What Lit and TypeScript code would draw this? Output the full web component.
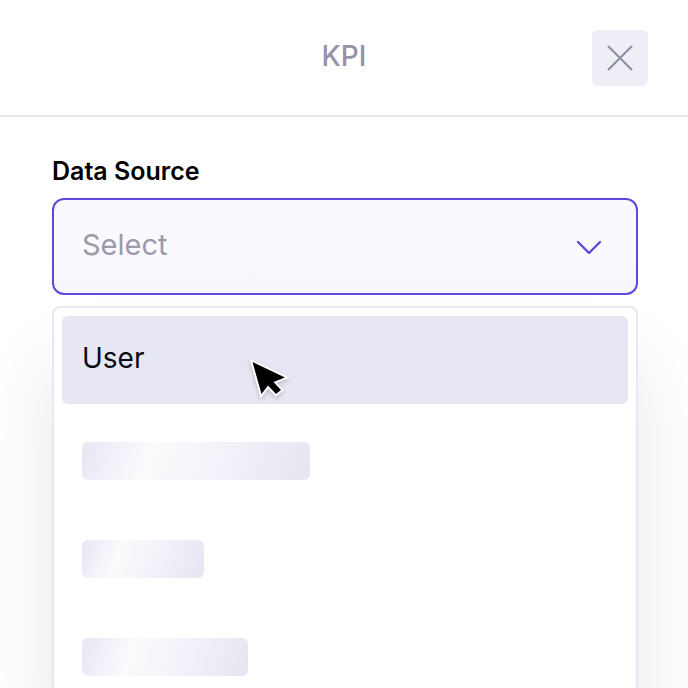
import { LitElement, html, css, svg } from "lit";
import { customElement, state } from "lit/decorators.js";
import { styleMap } from "lit/directives/style-map.js";

const closeIcon = svg`<path d="M2 2 L26 26 M26 2 L2 26" fill="none" stroke="#8f8fa3" stroke-width="2.2" />`;
const chevronIcon = svg`<path d="M2 3 L13 14 L24 3" fill="none" stroke="#5b4bdb" stroke-width="2.4" stroke-linecap="round" stroke-linejoin="round" />`;

@customElement("app-root")
export class AppRoot extends LitElement {
  static styles = css`
    :host {
      display: flex;
      flex-direction: column;
      height: 100vh;
      overflow: hidden;
      background: #fff;
      color: #0b0b12;
      font-family: Inter, "Liberation Sans", sans-serif;
    }
    * {
      box-sizing: border-box;
    }
    header {
      display: grid;
      grid-template-columns: 56px 1fr 56px;
      align-items: center;
      padding: 30px 40px 29px;
      border-bottom: 2px solid #e6e6ee;
    }
    h1 {
      grid-column: 2;
      margin: 0;
      padding-bottom: 4px;
      text-align: center;
      font-size: 28px;
      line-height: 32px;
      font-weight: 500;
      color: #9594a6;
    }
    .close {
      display: grid;
      place-items: center;
      width: 56px;
      height: 56px;
      padding: 0;
      border: 0;
      border-radius: 6px;
      background: #eeeff6;
    }
    main {
      flex: 1;
      display: flex;
      flex-direction: column;
      padding: 38px 50px 0 52px;
      min-height: 0;
    }
    label {
      font-size: 25px;
      line-height: 32px;
      font-weight: 600;
      color: #000;
      margin-bottom: 11px;
    }
    .field {
      display: grid;
      align-items: center;
      margin-bottom: 11px;
    }
    .field > * {
      grid-area: 1 / 1;
    }
    select {
      appearance: none;
      width: 100%;
      height: 97px;
      margin: 0;
      padding: 0 80px 4px 28px;
      border: 2px solid #5b4bdb;
      border-radius: 12px;
      outline: none;
      background: linear-gradient(#faf9ff 60%, #f7f6fd);
      font: 400 29px/32px Inter, "Liberation Sans", sans-serif;
      color: #9b9aa9;
    }
    .chevron {
      justify-self: end;
      margin-right: 36px;
      pointer-events: none;
    }
    .menu {
      position: relative;
      flex: 1 0 auto;
      margin: 0;
      padding: 8px;
      list-style: none;
      background: #fff;
      border: 2px solid #e8e7f3;
      border-bottom: 0;
      border-radius: 8px 8px 0 0;
      box-shadow: 0 60px 80px rgba(0, 0, 0, 0.1);
    }
    .option {
      display: block;
      width: 100%;
      height: 88px;
      padding: 0 20px 4px;
      border: 0;
      border-radius: 6px;
      background: #e7e6f3;
      text-align: left;
      font: 400 28px/32px Inter, "Liberation Sans", sans-serif;
      color: #0b0b12;
    }
    .loading {
      display: flex;
      flex-direction: column;
      gap: 60px;
      padding: 38px 20px 0;
    }
    .bar {
      height: 38px;
      border-radius: 6px;
      background: linear-gradient(110deg, #e9e9f6 4%, #fbfbfc 30%, #efeff8 70%, #e7e7f3 96%);
    }
    .cursor {
      position: absolute;
      left: 192px;
      top: 48px;
      pointer-events: none;
      filter: drop-shadow(0 2px 2px rgba(0, 0, 0, 0.2));
    }
  `;

  @state() private source = "";
  private widths = [228, 122, 166];

  render() {
    return html`
      <header>
        <h1>KPI</h1>
        <button class="close" aria-label="Close">
          <svg width="28" height="28" viewBox="0 0 28 28">${closeIcon}</svg>
        </button>
      </header>
      <main>
        <label for="source">Data Source</label>
        <div class="field">
          <select
            id="source"
            .value=${this.source}
            @change=${(e: Event) => (this.source = (e.target as HTMLSelectElement).value)}
          >
            <option value="">Select</option>
            <option value="user">User</option>
          </select>
          <svg class="chevron" width="26" height="16" viewBox="0 0 26 16">${chevronIcon}</svg>
        </div>
        <ul class="menu">
          <li><button class="option" @click=${() => (this.source = "user")}>User</button></li>
          <li class="loading">
            ${this.widths.map((w) => html`<div class="bar" style=${styleMap({ width: `${w}px` })}></div>`)}
          </li>
          <svg class="cursor" width="48" height="48" viewBox="0 0 48 48" aria-hidden="true">
            <path
              d="M6.5 6 L15.5 38 L22 29.5 L30 38 L35 34 L27.5 26 L39 21.5 Z"
              fill="#000"
              stroke="#fff"
              stroke-width="4"
              stroke-linejoin="miter"
              paint-order="stroke"
            />
          </svg>
        </ul>
      </main>
    `;
  }
}
